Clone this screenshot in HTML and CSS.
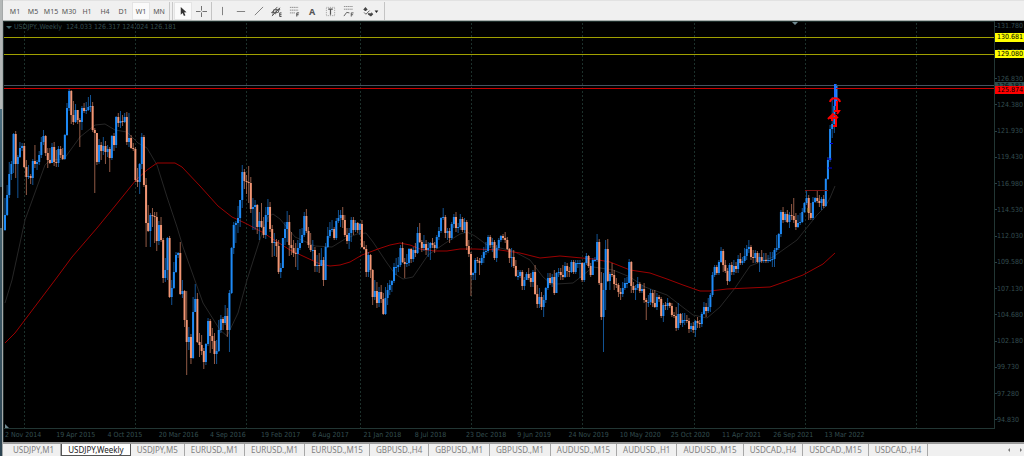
FILE: index.html
```html
<!DOCTYPE html>
<html lang="en">
<head>
    <meta charset="UTF-8">
    <meta name="viewport" content="width=device-width, initial-scale=1.0">
    <title>USDJPY,Weekly</title>
    <link rel="stylesheet" href="styles.css">
</head>
<body>
    <div class="edge"></div>
    <div class="terminal">
        <!-- Toolbar -->
        <div class="toolbar">
            <div class="group periods">
                <button type="button">M1</button>
                <button type="button">M5</button>
                <button type="button">M15</button>
                <button type="button">M30</button>
                <button type="button">H1</button>
                <button type="button">H4</button>
                <button type="button">D1</button>
                <button type="button" class="pressed">W1</button>
                <button type="button">MN</button>
            </div>
            <div class="grip"></div>
            <div class="group">
                <button type="button" class="pressed" aria-label="Cursor">
                    <svg viewBox="0 0 12 12"><path d="M3 1v8.500l2-1.800 1.500 3.300 1.600-.8-1.500-3.100 2.700-.2z" fill="#333"/></svg>
                </button>
                <button type="button" aria-label="Crosshair">
                    <svg viewBox="0 0 12 12"><path d="M6 0v5M6 7v5M0 6h5M7 6h5" stroke="#666"/></svg>
                </button>
            </div>
            <div class="separator"></div>
            <div class="group">
                <button type="button" aria-label="Vertical line">
                    <svg viewBox="0 0 12 12"><path d="M6 1v9" stroke="#777"/></svg>
                </button>
                <button type="button" aria-label="Horizontal line">
                    <svg viewBox="0 0 12 12"><path d="M2 6h9" stroke="#777"/></svg>
                </button>
                <button type="button" aria-label="Trendline">
                    <svg viewBox="0 0 12 12"><path d="M2 10l9-9" stroke="#777"/></svg>
                </button>
                <button type="button" aria-label="Equidistant channel">
                    <svg viewBox="0 0 12 12"><path d="M0 8l7-7M1 11l9-9M3 4l-1 6M6 3l-1 6M9 2l-1 5M1 7h7M3 4h7" stroke="#555" fill="none"/><path d="M11.500 7.500h-2v4h2M9.500 9.500h2" stroke="#444" fill="none"/></svg>
                </button>
                <button type="button" aria-label="Fibonacci retracement">
                    <svg viewBox="0 0 12 12"><path d="M1 1.500h9M1 4.500h9M1 7.500h6" stroke="#888" stroke-dasharray="1.500 .5"/><path d="M11 7.500H8.500v4M8.500 9.500h2" stroke="#444" fill="none"/></svg>
                </button>
                <button type="button" class="letter">A</button>
                <button type="button" aria-label="Text label">
                    <svg viewBox="0 0 12 12"><path d="M1.500 1.500h9v9h-9z" stroke="#999" fill="none" stroke-dasharray="1 1"/><path d="M3.500 3.500h5M6 3.500v6" stroke="#555" stroke-width="1.300"/></svg>
                </button>
                <button type="button" aria-label="Fibonacci fan">
                    <svg viewBox="0 0 12 12"><path d="M1 .5h10M1 3.500h10" stroke="#888" stroke-dasharray="1.500 .5"/><path d="M1 11l3-4 3 .5M11.500 7.500H9v4M9 9.500h2" stroke="#555" fill="none"/></svg>
                </button>
                <button type="button" class="wide" aria-label="Arrows">
                    <svg viewBox="0 0 18 12"><path d="M1 4l2.500-3L6 4 4.500 4.500v1h-2v-1zM6 8h4V6.500L12 9l-2.500 2.500-3-2z" fill="#444"/><path d="M2 7l2 2 4-4" stroke="#555" fill="none"/><path d="M13.500 5h4l-2 2.500z" fill="#222"/></svg>
                </button>
            </div>
            <div class="separator"></div>
        </div>

        <!-- Chart window -->
        <div class="chart">
            <div class="plot">
                <svg id="plot" viewBox="4 22 990 406" preserveAspectRatio="none">
                    <path class="grid" d="M24.500 23v405M135.500 23v405M246.500 23v405M360.500 23v405M471.500 23v405M582.500 23v405M694.500 23v405M805.500 23v405M916.500 23v405"/>
                    <polyline class="ma-fast" points="5,303 12,280 25,220 45,165 50,160 64,159 80,137 95,125 105,124 115,130 127,132 138,143 147,148 157,165 167,197 177,227 183,247 203,303 220,330 227,336 238,313 247,280 263,230 268,217 273,214 280,219 295,237 315,246 332,247 345,239 357,234 366,233 373,242 387,263 395,274 403,279 413,277 428,255 447,242 460,234 467,232 475,236 487,245 513,251 530,260 543,277 550,283 557,284 573,283 582,276 593,267 600,268 613,270 630,277 645,287 667,295 693,315 707,318 720,307 735,288 750,266 773,257 797,240 817,215 825,207 830,198 835,186"/>
                    <polyline class="ma-slow" points="5,343 15,333 55,280 72,257 97,228 115,206 136,180 147,170 157,163 175,163 182,167 200,186 218,206 232,217 245,223 262,232 290,250 305,257 320,264 330,266 340,265 350,262 362,255 378,249 390,245 400,243 410,245 420,249 435,251 447,251 460,249 475,249 500,250 520,253 540,258 560,256 593,259 610,262 630,270 650,273 667,279 683,285 700,291 710,291 727,289 770,287 787,281 803,275 823,264 835,253"/>
                    <path id="bear-wicks" class="bear wick"/>
                    <path id="bull-wicks" class="bull wick"/>
                    <path id="bear-bodies" class="bear body"/>
                    <path id="bull-bodies" class="bull body"/>
                    <path class="level yellow" d="M4 37.500h990M4 54.500h990"/>
                    <path class="level bid" d="M4 85.500h990"/>
                    <path class="level red" d="M4 88.500h990"/>
                    <path class="resistance" d="M805 190.500h23"/>
                    <path class="entries" d="M830 143.500h3M827 159h5M828 168h4"/>
                    <path class="stops" d="M807 209h2M809 211h-2"/>
                    <path class="bull last" d="M835 84v22"/>
                    <path class="arrows" d="M830 102c1-5 9-5 10 0M837 101v9M834 111h5l-2 3M828 119l5-5 5 4M830 118h5M832 115v6M836 115v11h-3"/>
                    <path class="marker" d="M792 22h6l-3 3zM5 424v4h4z"/>
                </svg>
                <div class="title"><span class="caret"></span>USDJPY.,Weekly&nbsp; 124.033 126.317 124.024 126.181</div>
            </div>
            <div class="prices">
                <span>131.780</span><span>129.280</span><span>126.830</span><span>124.380</span>
                <span>121.930</span><span>119.430</span><span>116.980</span><span>114.530</span>
                <span>112.030</span><span>109.580</span><span>107.130</span><span>104.680</span>
                <span>102.180</span><span>99.730</span><span>97.280</span><span>94.830</span>
                <div class="tag high">130.681</div>
                <div class="tag mid">129.080</div>
                <div class="tag bid">126.181</div>
                <div class="tag low">125.874</div>
            </div>
            <div class="dates">
                <span>2 Nov 2014</span><span>19 Apr 2015</span><span>4 Oct 2015</span><span>20 Mar 2016</span>
                <span>4 Sep 2016</span><span>19 Feb 2017</span><span>6 Aug 2017</span><span>21 Jan 2018</span>
                <span>8 Jul 2018</span><span>23 Dec 2018</span><span>9 Jun 2019</span><span>24 Nov 2019</span>
                <span>10 May 2020</span><span>25 Oct 2020</span><span>11 Apr 2021</span><span>26 Sep 2021</span>
                <span>13 Mar 2022</span>
            </div>
        </div>

        <!-- Chart tabs -->
        <div class="tabs">
            <button type="button">USDJPY,M1</button>
            <button type="button" class="active">USDJPY,Weekly</button>
            <button type="button">USDJPY,M5</button>
            <button type="button">EURUSD.,M1</button>
            <button type="button">EURUSD.,M1</button>
            <button type="button">EURUSD.,M15</button>
            <button type="button">GBPUSD.,H4</button>
            <button type="button">GBPUSD.,M1</button>
            <button type="button">GBPUSD.,M1</button>
            <button type="button">AUDUSD.,M15</button>
            <button type="button">AUDUSD.,H1</button>
            <button type="button">AUDUSD.,M15</button>
            <button type="button">USDCAD.,H4</button>
            <button type="button">USDCAD.,M15</button>
            <button type="button">USDCAD.,H4</button>
            <div class="scroll">
                <button type="button" aria-label="Scroll left"><svg viewBox="0 0 4 6"><path d="M3 1v4L1 3z"/></svg></button>
                <button type="button" aria-label="Scroll right"><svg viewBox="0 0 4 6"><path d="M1 1v4l2-2z"/></svg></button>
            </div>
        </div>
    </div>
    <script src="chart.js"></script>
</body>
</html>
```

FILE: styles.css
```css
body {
    margin: 0;
    display: flex;
    min-height: 100vh;
    background-color: #f0f0f0;
    font-family: 'Noto Sans', sans-serif;
    overflow-x: hidden;
}

button {
    border: none;
    background: none;
    padding: 0;
    margin: 0;
    font-family: inherit;
    cursor: pointer;
}

.edge {
    flex: 0 0 2px;
    background: linear-gradient(#b4b8b8 24%, #4d6f80 24%, #37586a 41%, #15191b 41%, #15191b 50%, #46626f 50%, #2c4350);
    border-right: 1px solid #a5a9a9;
}

.terminal {
    flex: 1;
    min-width: 0;
    display: flex;
    flex-direction: column;
}

/* Toolbar */
.toolbar {
    display: flex;
    align-items: stretch;
    height: 18px;
    padding: 1px 0 0 3px;
    border-top: 1px solid #e2e2e2;
    border-bottom: 1px solid #a9b0ae;
}

.group {
    display: flex;
}

.toolbar button {
    width: 18px;
    display: flex;
    align-items: center;
    justify-content: center;
    font-size: 7px;
    color: #555;
}

.toolbar .periods button {
    padding-top: 1px;
}

.toolbar .pressed {
    background-color: #fafafa;
    box-shadow: inset 0 0 0 1px #e4e4e4;
}

.toolbar svg {
    width: 11px;
    height: 11px;
}

.toolbar .letter {
    font-size: 9px;
    font-weight: bold;
}

.toolbar .wide {
    width: 26px;
}

.toolbar .wide svg {
    width: 17px;
}

.grip {
    width: 2px;
    margin: 0 1px;
    border-left: 1px solid #c8c8c8;
    border-right: 1px solid #c8c8c8;
}

.separator {
    width: 1px;
    margin: 0 1px;
    background-color: #c4c4c4;
}

/* Chart window */
.chart {
    flex: 1;
    display: grid;
    grid-template-columns: 1fr 30px;
    grid-template-rows: 1fr 13px;
    background-color: #000;
    color: #344e50;
    font-family: 'DejaVu Sans Condensed', 'DejaVu Sans', sans-serif;
    font-size: 7px;
    line-height: 10px;
    border-left: 1px solid #1f2c2c;
}

.plot {
    position: relative;
    min-height: 300px;
    border-top: 1px solid #1c2c29;
    border-bottom: 1px solid #223634;
    box-sizing: border-box;
}

.plot svg {
    position: absolute;
    top: 0;
    left: 0;
    width: 100%;
    height: 100%;
}

.plot path,
.plot polyline {
    fill: none;
}

.grid {
    stroke: #1c302b;
    stroke-dasharray: 2 2;
}

.plot .ma-fast {
    stroke: #262626;
}

.plot .ma-slow {
    stroke: #9c0000;
}

.bull {
    stroke: #1e8af6;
}

.bear {
    stroke: #f29674;
}

.wick {
    opacity: 0.6;
}

.body {
    stroke-width: 2;
}

.last {
    stroke: #1e6eff;
    stroke-width: 2;
}

.level.yellow {
    stroke: #a0a000;
}

.level.bid {
    stroke: #46525e;
}

.level.red {
    stroke: #c80000;
}

.resistance {
    stroke: #7a1414;
}

.entries {
    stroke: #0000dd;
}

.stops {
    stroke: #b09a20;
}

.arrows {
    stroke: #f00;
    stroke-width: 2;
}

.plot .marker {
    fill: #6f8890;
}

.title {
    position: absolute;
    top: 0;
    left: 2px;
    white-space: nowrap;
}

.caret {
    display: inline-block;
    margin-right: 2px;
    vertical-align: middle;
    border: 3px solid transparent;
    border-top-color: #3f6468;
    border-bottom: none;
}

.prices {
    position: relative;
    display: flex;
    flex-direction: column;
    justify-content: space-between;
    padding-bottom: 4px;
    border-left: 1px solid #223634;
}

.prices span {
    display: flex;
    align-items: center;
}

.prices span::before {
    content: '';
    width: 2px;
    height: 1px;
    background-color: #2b4244;
}

/* Price levels, placed on the axis scale */
.tag {
    position: absolute;
    left: 0;
    right: 0;
    height: 8px;
    line-height: 8px;
    padding-left: 2px;
    color: #000;
}

.tag.high {
    top: 3%;
    height: 9px;
    line-height: 9px;
    background-color: #ff0;
}

.tag.mid {
    top: 7%;
    background-color: #ff0;
}

.tag.bid {
    top: 15%;
    background-color: #2f4f4f;
}

.tag.low {
    top: 16%;
    background-color: #f00;
}

.dates {
    display: flex;
    padding: 1px 0 2px 1px;
    min-width: 0;
}

.dates span {
    flex: 0 0 5.18%;
    white-space: nowrap;
}

/* Chart tabs */
.tabs {
    display: flex;
    height: 12px;
    padding-left: 4px;
    border-top: 2px solid #9a9a9a;
    overflow: hidden;
}

.tabs button {
    flex: none;
    padding: 0 6px;
    font-size: 8px;
    line-height: 10px;
    color: #808080;
    border-right: 1px solid #a8a8a8;
}

.tabs .active {
    color: #222;
    background-color: #fff;
    border: 1px solid #555;
    border-top: none;
}

.scroll {
    margin-left: auto;
    display: flex;
    gap: 8px;
    padding-right: 1px;
}

.tabs .scroll button {
    padding: 0;
    border: none;
}

.scroll svg {
    width: 4px;
    height: 6px;
    fill: #777;
}
```

FILE: chart.js
```js
// Weekly bars: high, low, close. Each bar opens at the previous close.
const bars = `198,231,215 185,216,195 162,198,174 161,180,164 133,173,134 131,178,164 155,198,157 142,158,148
143,151,146 143,168,167 160,195,177 165,179,176 174,184,178 159,185,161 145,168,164 160,170,162 151,165,155
137,158,142 130,145,136 135,156,153 148,168,160 148,164,163 143,163,147 142,166,162 150,167,163 146,167,149
146,158,155 148,160,159 134,160,135 103,136,108 88,111,91 90,124,115 101,125,122 104,123,110 110,124,120
118,147,122 106,130,108 103,113,111 102,114,110 97,111,107 95,112,106 102,132,130 128,193,133 133,165,162
139,164,145 142,160,151 137,155,146 141,164,152 145,157,149 147,172,158 135,160,136 133,151,145 116,148,117
113,127,123 111,128,121 115,126,122 113,123,117 112,145,142 113,147,138 135,149,148 143,151,149 147,182,180
168,187,182 163,194,164 133,169,137 135,187,185 178,247,223 205,232,231 213,247,215 208,227,216 212,243,217
212,251,241 221,245,225 217,242,240 238,283,278 258,282,270 237,280,238 236,298,297 280,305,288 262,289,272
252,273,255 252,258,253 242,295,294 280,298,291 290,327,320 291,375,342 327,350,337 334,364,358 297,359,312
284,308,299 293,343,342 333,357,345 335,355,351 348,369,362 343,365,344 318,346,321 319,353,336 328,349,341
333,364,354 340,364,351 320,352,330 315,333,319 317,330,323 305,325,316 308,337,330 290,352,293 247,294,248
222,254,225 221,243,223 206,233,218 200,227,200 165,208,172 169,189,181 175,194,182 166,203,183 177,213,209
198,230,207 200,230,205 204,234,227 212,240,221 203,228,227 217,238,235 207,239,215 199,222,207 202,232,229
225,257,243 233,256,242 239,257,246 240,274,272 263,278,268 238,262,238 222,245,229 211,242,222 215,256,245
232,255,248 240,257,253 243,267,254 240,270,248 229,250,243 228,242,235 212,237,216 209,233,231 227,248,245
233,252,250 240,260,250 247,272,266 255,272,265 253,273,266 248,265,260 257,286,280 243,278,247 227,248,236
222,238,230 220,232,229 227,240,238 218,240,221 210,223,218 210,227,215 207,228,220 215,237,235 228,244,241
228,249,233 217,242,220 217,235,230 220,232,223 222,233,230 223,235,224 220,248,247 241,250,249 245,277,272
252,277,255 254,278,270 269,305,297 280,300,291 282,308,303 287,307,292 285,303,299 293,315,314 287,315,298
283,305,290 280,295,285 280,292,281 263,283,267 258,275,267 257,272,265 245,267,248 242,263,262 258,278,264
254,267,263 248,266,249 248,263,259 247,262,250 243,257,253 227,254,233 223,243,242 240,252,248 235,251,244
240,255,250 242,257,248 242,260,243 238,248,245 242,253,248 235,249,237 227,240,231 217,233,218 208,220,217
215,238,233 228,240,231 228,243,238 222,240,224 214,228,217 212,232,228 223,233,227 214,230,219 217,232,230
218,233,222 220,250,246 240,257,254 252,296,275 272,280,273 258,280,260 257,263,261 258,275,263 255,265,258
247,263,252 242,255,251 235,253,237 235,248,245 238,252,242 240,260,258 245,262,248 238,250,240 235,242,236
234,240,238 232,243,240 237,250,249 248,263,258 248,267,257 250,268,266 260,277,276 270,280,276 270,278,272
270,290,286 277,290,280 272,280,274 268,280,278 273,287,282 270,287,272 265,295,294 285,308,304 288,308,297
292,310,307 295,317,300 287,303,288 273,290,278 273,285,283 274,287,277 270,295,293 272,293,273 268,277,272
268,280,275 265,280,277 262,278,266 263,277,271 267,277,272 260,273,262 260,274,272 260,274,263 260,268,263
260,278,263 262,282,280 262,282,263 253,265,256 255,268,266 263,277,275 258,275,260 257,262,260 234,262,242
239,285,283 272,320,317 273,352,290 240,310,249 239,282,281 272,290,274 263,277,275 270,290,284 278,288,285
283,297,292 288,300,294 282,297,288 278,290,283 277,288,283 259,283,262 261,293,286 282,293,290 285,300,288
277,290,284 282,293,291 285,293,289 283,303,300 298,320,302 295,307,302 289,305,293 290,307,303 290,308,307
293,310,297 295,302,299 297,318,316 303,322,305 302,310,306 298,310,303 302,308,306 303,317,315 312,318,316
307,331,328 303,330,314 313,325,323 313,327,320 313,325,320 315,323,321 318,333,329 323,332,326 322,333,330
320,337,321 317,328,323 320,328,324 312,327,314 302,315,307 303,317,311 298,313,307 293,312,295 272,297,275
265,277,267 265,275,273 260,275,262 247,263,251 249,272,265 260,273,271 268,285,281 263,282,265 262,275,272
260,275,266 262,273,269 255,273,259 253,265,263 257,265,261 248,263,256 245,260,249 240,253,247 245,260,257
250,263,258 250,263,253 251,263,262 253,272,257 250,263,261 253,263,260 253,263,261 255,263,260 252,262,260
252,267,259 248,267,250 235,252,248 233,250,234 210,237,212 207,223,220 212,222,214 210,223,222 212,228,215
204,220,216 198,223,220 213,230,227 215,228,223 213,225,222 208,223,212 202,213,203 190,205,198 195,220,213
203,220,218 197,220,202 197,203,198 190,203,201 195,207,203 197,210,199 195,208,206 178,207,179 157,180,160
125,162,129 97,138,124 97,133,106 84,108,86`.split(/\s+/).map(bar => bar.split(',').map(Number));

const step = 2.1375;
const paths = { bull: { wicks: '', bodies: '' }, bear: { wicks: '', bodies: '' } };
let open = 230;

bars.forEach(([high, low, close], i) => {
    const x = (5 + i * step).toFixed(2);
    const side = close <= open ? paths.bull : paths.bear;
    const top = Math.min(open, close);
    const bottom = Math.max(open, close, top + 1);
    side.wicks += `M${x} ${high}V${low}`;
    side.bodies += `M${x} ${top}V${bottom}`;
    open = close;
});

for (const side of ['bull', 'bear']) {
    document.getElementById(side + '-wicks').setAttribute('d', paths[side].wicks);
    document.getElementById(side + '-bodies').setAttribute('d', paths[side].bodies);
}
```
